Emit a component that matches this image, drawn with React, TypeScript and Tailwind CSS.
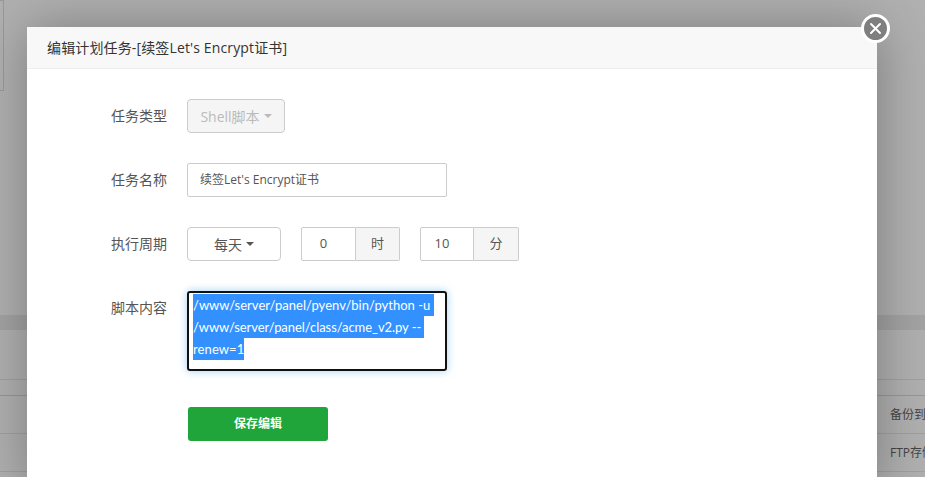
const font = { fontFamily: '"Open Sans", "Noto Sans CJK SC", sans-serif' };

function Label({ children }: { children: React.ReactNode }) {
  return <div className="w-[160px] shrink-0 text-right pr-[20px] text-[14px] leading-[34px] text-[#555]">{children}</div>;
}

function Caret({ color }: { color: string }) {
  return <svg width="8" height="4" viewBox="0 0 8 4" className="ml-[4px]"><path d="M0 0h8L4 4z" fill={color} /></svg>;
}

function TimeField({ value, unit, inputW, unitW }: { value: string; unit: string; inputW: string; unitW: string }) {
  return (
    <div className="flex h-[34px] text-[13px] text-[#555]">
      <div className={`${inputW} h-full border border-[#ccc] rounded-l-[2px] pr-[10px] flex items-center justify-center`}>{value}</div>
      <div className={`${unitW} h-full border border-l-0 border-[#ccc] bg-[#f5f5f5] rounded-r-[2px] flex items-center justify-center`}>{unit}</div>
    </div>
  );
}

export default function App() {
  return (
    <div className="relative w-[925px] h-[477px] overflow-hidden bg-[#b3b3b3]" style={font}>
      {/* dimmed page behind the dialog */}
      <div className="h-[477px] flex flex-col bg-[#b0b0b0]">
        <div className="h-[91px] w-[4px] border border-l-0 border-[#999]" />
        <div className="h-[224px]" />
        <div className="h-[15px] bg-[#a3a3a3]" />
        <div className="h-[50px] border-b border-[#a0a0a0]" />
        <div className="h-[16px] border-b border-[#979797]" />
        <div className="h-[38px] border-b border-[#a0a0a0] flex items-center justify-end text-[12px] text-[#444] whitespace-nowrap overflow-hidden">
          <span className="w-[35px] shrink-0 overflow-hidden">备份到</span>
        </div>
        <div className="h-[38px] border-b border-[#a0a0a0] flex items-center justify-end text-[12px] text-[#444] whitespace-nowrap overflow-hidden">
          <span className="w-[35px] shrink-0 overflow-hidden">FTP存储</span>
        </div>
      </div>

      {/* dialog */}
      <div className="absolute left-[27px] top-[27px] w-[850px] h-[470px] bg-white shadow-[1px_1px_50px_rgba(0,0,0,0.3)]">
        <div className="h-[42px] bg-[#f8f8f8] border-b border-[#eee] pl-[20px] text-[14px] leading-[41px] tracking-[0.14px] text-[#333]">
          编辑计划任务-[续签Let's Encrypt证书]
        </div>
        <div className="pt-[30px] flex flex-col">
          <div className="flex h-[34px]">
            <Label>任务类型</Label>
            <div className="w-[98px] h-[34px] border border-[#ccc] rounded-[4px] bg-[#f5f5f5] flex items-center justify-center text-[14px] text-[#bbb]">
              Shell脚本<Caret color="#bbb" />
            </div>
          </div>
          <div className="flex h-[34px] mt-[30px]">
            <Label>任务名称</Label>
            <div className="w-[260px] h-[34px] border border-[#ccc] rounded-[2px] pl-[12px] flex items-center text-[12px] text-[#555]">
              续签Let's Encrypt证书
            </div>
          </div>
          <div className="flex h-[34px] mt-[30px]">
            <Label>执行周期</Label>
            <div className="w-[94px] h-[34px] border border-[#ccc] rounded-[4px] flex items-center justify-center text-[14px] text-[#555]">
              每天<Caret color="#555" />
            </div>
            <div className="ml-[20px]"><TimeField value="0" unit="时" inputW="w-[55px]" unitW="w-[44px]" /></div>
            <div className="ml-[20px]"><TimeField value="10" unit="分" inputW="w-[54px]" unitW="w-[45px]" /></div>
          </div>
          <div className="flex mt-[30px]">
            <Label>脚本内容</Label>
            <div className="w-[260px] h-[80px] border-2 border-[#111] rounded-[3px] pl-[4px] pt-[1px] shadow-[0_0_8px_rgba(102,175,233,0.6)] text-[13px] leading-[22px] text-white whitespace-pre font-['Lato']">
              <div><span className="bg-[#3390ff] inline-block h-[22px] tracking-[0.01px]">{"/www/server/panel/pyenv/bin/python -u "}</span></div>
              <div><span className="bg-[#3390ff] inline-block h-[22px] tracking-[-0.06px]">{"/www/server/panel/class/acme_v2.py -- "}</span></div>
              <div><span className="bg-[#3390ff] inline-block h-[22px] tracking-[0.1px]">renew=1</span></div>
            </div>
          </div>
          <div className="ml-[161px] mt-[36px] w-[140px] h-[34px] bg-[#20a53a] rounded-[3px] flex items-center justify-center text-[12px] font-bold text-white">
            保存编辑
          </div>
        </div>
      </div>

      {/* close button over the dialog corner */}
      <div className="absolute left-[861px] top-[14px] w-[29px] h-[29px] rounded-full bg-[#7f7f7f] border-[3px] border-white flex items-center justify-center">
        <svg width="13" height="13" viewBox="0 0 13 13"><path d="M2 2l9 9M11 2l-9 9" stroke="#fff" strokeWidth="2" strokeLinecap="round" /></svg>
      </div>
    </div>
  );
}
